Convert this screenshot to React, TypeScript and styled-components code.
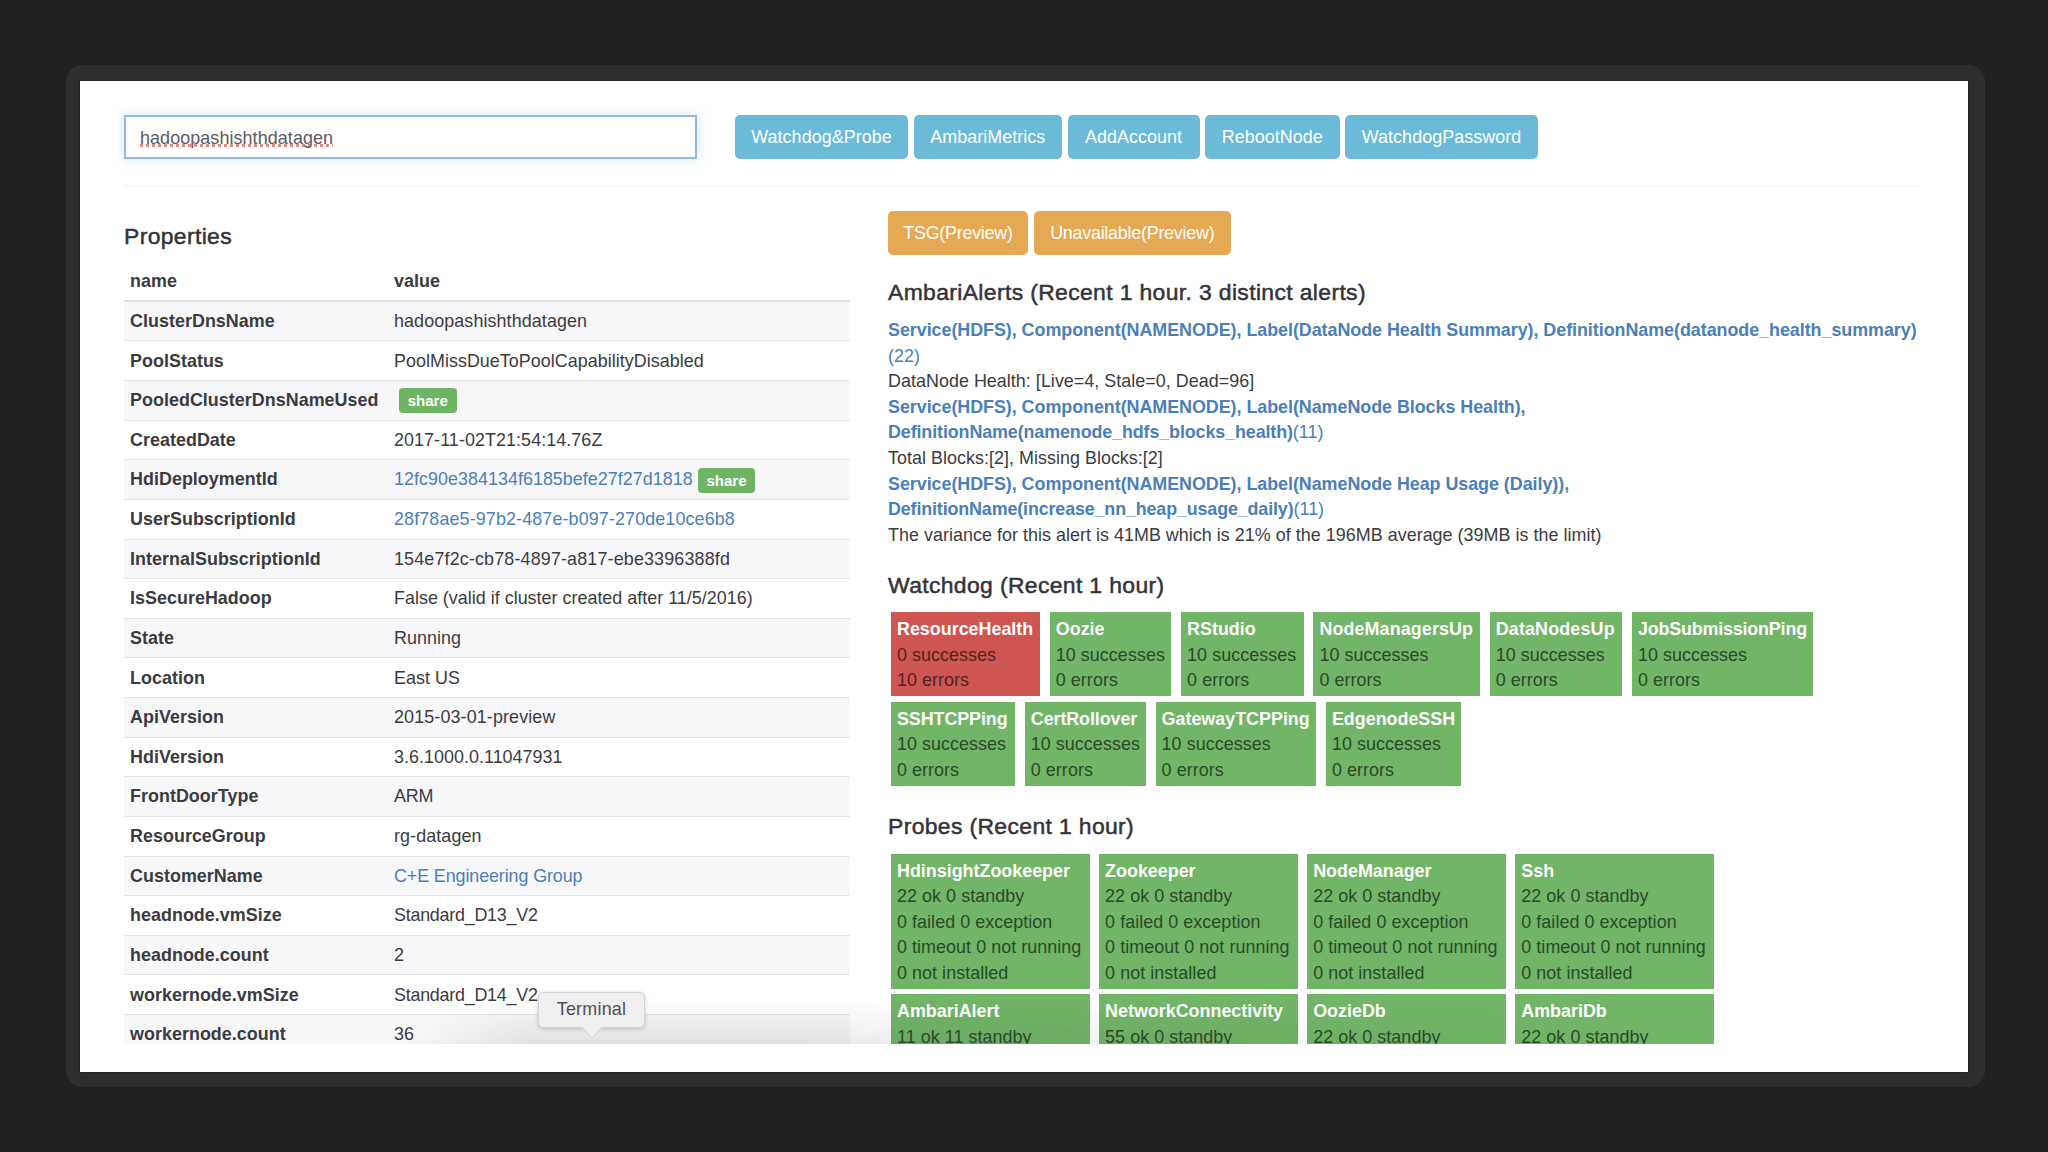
import React from "react";
import styled, { createGlobalStyle } from "styled-components";

const Global = createGlobalStyle`
  * { box-sizing: border-box; }
  body {
    margin: 0;
    background: #222122;
    font-family: "Liberation Sans", Arial, sans-serif;
    font-size: 17.9px;
    line-height: 25.57px;
    letter-spacing: 0.04px;
    color: #3b3b3f;
    overflow: hidden;
  }
`;

const Stage = styled.div`
  width: 2048px;
  height: 1152px;
  padding: 65px 63px 65px 66px;
  background: #222122;
`;

const Frame = styled.div`
  height: 1022px;
  border-radius: 16px;
  padding: 16px 17px 15px 14px;
  background: #2f2e2f;
`;

const Sheet = styled.div`
  height: 991px;
  background: #fff;
  box-shadow: 0 0 2px 0 #111;
`;

const Viewport = styled.div`
  position: relative;
  height: 963px;
  padding: 34px 49px 0 44px;
  overflow: hidden;
`;

const TopBar = styled.div`
  display: flex;
  height: 72px;
  border-bottom: 2px solid #f8f8fb;
`;

const ClusterInput = styled.div`
  width: 573px;
  height: 44px;
  margin-right: 38px;
  padding: 9px 14px;
  border: 2px solid #94bbdd;
  box-shadow: 0 0 9px rgba(102, 185, 233, 0.35);
  color: #5b5b62;
  letter-spacing: 0.1px;
`;

const Misspelled = styled.span`
  text-decoration: underline dotted #dd8e86 3px;
  text-underline-offset: 0;
  text-decoration-skip-ink: none;
`;

const ButtonRow = styled.div`
  display: flex;
  gap: 5.5px;
`;

const Button = styled.button<{ $tone: "info" | "warning"; $w: number }>`
  width: ${(p) => p.$w}px;
  height: 43.5px;
  padding: 2px 0 0;
  border: 0;
  border-radius: 5px;
  background: ${(p) => (p.$tone === "info" ? "#6bbad8" : "#e5a853")};
  color: #fff;
  font: inherit;
  letter-spacing: ${(p) => (p.$tone === "info" ? 0.06 : -0.24)}px;
  white-space: nowrap;
`;

const Columns = styled.div`
  display: grid;
  grid-template-columns: 726px 1fr;
  column-gap: 38px;
`;

const LeftColumn = styled.section`
  padding-top: 35px;
`;

const RightColumn = styled.section`
  padding-top: 24px;
`;

const Heading = styled.h4<{ $top?: number; $bottom?: number }>`
  margin: ${(p) => p.$top ?? 0}px 0 ${(p) => p.$bottom ?? 0}px;
  font-size: 22.9px;
  font-weight: 400;
  line-height: 28px;
  letter-spacing: 0.37px;
  color: #333337;
  -webkit-text-stroke: 0.5px #333337;
`;

const PropertyRow = styled.div<{ $striped?: boolean }>`
  display: grid;
  grid-template-columns: 264px 1fr;
  align-items: center;
  height: 39.63px;
  padding: 1.2px 6px 0;
  border-bottom: 1.5px solid #e4e4e7;
  background: ${(p) => (p.$striped ? "#f7f7f9" : "#fff")};
  white-space: nowrap;
`;

const HeaderRow = styled(PropertyRow)`
  height: 38px;
  border-bottom: 0;
  font-weight: 700;
`;

const TableBody = styled.div`
  border-top: 2px solid #dfdfe2;
`;

const Name = styled.span`
  font-weight: 700;
`;

const Value = styled.span<{ $tracking?: number }>`
  display: flex;
  align-items: center;
  letter-spacing: ${(p) => p.$tracking ?? 0.04}px;
`;

const Link = styled.a`
  color: #4a7fb8;
`;

const Share = styled.span`
  width: 57.5px;
  height: 25px;
  margin-left: 5px;
  border-radius: 4px;
  background: #6fb365;
  color: #fff;
  font-size: 15px;
  font-weight: 700;
  line-height: 26px;
  text-align: center;
`;

const AlertLine = styled.div`
  white-space: nowrap;
`;

const AlertLabel = styled.b<{ $tracking?: number }>`
  letter-spacing: ${(p) => p.$tracking ?? -0.04}px;
`;

const CardRow = styled.div<{ $gap: number }>`
  display: flex;
  column-gap: ${(p) => p.$gap}px;
  padding-left: 3px;
  margin-bottom: 5.5px;
`;

const Card = styled.div<{ $w: number; $bad?: boolean }>`
  width: ${(p) => p.$w}px;
  padding: 5px 0 2.3px 6px;
  background: ${(p) => (p.$bad ? "#cf5550" : "#71b566")};
  color: ${(p) => (p.$bad ? "#4d2426" : "#2b4a2b")};
  letter-spacing: 0.06px;
  white-space: nowrap;
`;

const CardTitle = styled.div<{ $tracking?: number }>`
  color: #fff;
  font-weight: 700;
  letter-spacing: ${(p) => p.$tracking ?? 0}px;
`;

const DockShade = styled.div`
  position: absolute;
  left: 330px;
  bottom: 0;
  width: 1200px;
  height: 44px;
  background: linear-gradient(to top, rgba(60, 60, 70, 0.11), rgba(60, 60, 70, 0));
  mask-image: linear-gradient(to right, transparent, #000 120px, #000 32%, transparent);
`;

const DockTip = styled.div`
  position: absolute;
  left: 458px;
  top: 911px;
  width: 107px;
  height: 36px;
  border: 1px solid #d2d2d5;
  border-radius: 5px;
  background: #efeef0;
  box-shadow: 0 1px 4px rgba(0, 0, 0, 0.18);
  color: #505054;
  line-height: 33px;
  letter-spacing: 0.25px;
  text-align: center;
`;

const TipArrow = styled.svg`
  position: absolute;
  left: 41px;
  top: 33px;
`;

type Property = { name: string; value?: string; link?: boolean; share?: boolean; tracking?: number };

const properties: Property[] = [
  { name: "ClusterDnsName", value: "hadoopashishthdatagen", tracking: 0.1 },
  { name: "PoolStatus", value: "PoolMissDueToPoolCapabilityDisabled" },
  { name: "PooledClusterDnsNameUsed", share: true },
  { name: "CreatedDate", value: "2017-11-02T21:54:14.76Z", tracking: 0.08 },
  { name: "HdiDeploymentId", value: "12fc90e384134f6185befe27f27d1818", link: true, share: true },
  { name: "UserSubscriptionId", value: "28f78ae5-97b2-487e-b097-270de10ce6b8", link: true, tracking: 0.13 },
  { name: "InternalSubscriptionId", value: "154e7f2c-cb78-4897-a817-ebe3396388fd", tracking: 0.16 },
  { name: "IsSecureHadoop", value: "False (valid if cluster created after 11/5/2016)", tracking: 0.02 },
  { name: "State", value: "Running" },
  { name: "Location", value: "East US" },
  { name: "ApiVersion", value: "2015-03-01-preview", tracking: 0.13 },
  { name: "HdiVersion", value: "3.6.1000.0.11047931" },
  { name: "FrontDoorType", value: "ARM", tracking: -0.2 },
  { name: "ResourceGroup", value: "rg-datagen", tracking: 0.1 },
  { name: "CustomerName", value: "C+E Engineering Group", link: true, tracking: -0.1 },
  { name: "headnode.vmSize", value: "Standard_D13_V2", tracking: -0.24 },
  { name: "headnode.count", value: "2" },
  { name: "workernode.vmSize", value: "Standard_D14_V2", tracking: -0.24 },
  { name: "workernode.count", value: "36" },
];

const actions: [string, number][] = [
  ["Watchdog&Probe", 173],
  ["AmbariMetrics", 148.5],
  ["AddAccount", 132],
  ["RebootNode", 134.5],
  ["WatchdogPassword", 193],
];

type Watchdog = { title: string; w: number; ok?: number; errors?: number; tracking?: number };

const watchdogs: Watchdog[][] = [
  [
    { title: "ResourceHealth", w: 149, ok: 0, errors: 10 },
    { title: "Oozie", w: 121.5 },
    { title: "RStudio", w: 122.5 },
    { title: "NodeManagersUp", w: 166.5, tracking: 0.12 },
    { title: "DataNodesUp", w: 132.5, tracking: 0.16 },
    { title: "JobSubmissionPing", w: 181, tracking: -0.18 },
  ],
  [
    { title: "SSHTCPPing", w: 124, tracking: -0.08 },
    { title: "CertRollover", w: 121, tracking: -0.08 },
    { title: "GatewayTCPPing", w: 160.5 },
    { title: "EdgenodeSSH", w: 135 },
  ],
];

const probeDetails = ["0 failed 0 exception", "0 timeout 0 not running", "0 not installed"];

const probes: { details: string[]; cards: [string, string][] }[] = [
  {
    details: probeDetails,
    cards: [
      ["HdinsightZookeeper", "22 ok 0 standby"],
      ["Zookeeper", "22 ok 0 standby"],
      ["NodeManager", "22 ok 0 standby"],
      ["Ssh", "22 ok 0 standby"],
    ],
  },
  {
    details: [],
    cards: [
      ["AmbariAlert", "11 ok 11 standby"],
      ["NetworkConnectivity", "55 ok 0 standby"],
      ["OozieDb", "22 ok 0 standby"],
      ["AmbariDb", "22 ok 0 standby"],
    ],
  },
];

export default function App() {
  return (
    <Stage>
      <Global />
      <Frame>
        <Sheet>
          <Viewport>
            <TopBar>
              <ClusterInput>
                <Misspelled>hadoopashishthdatagen</Misspelled>
              </ClusterInput>
              <ButtonRow>
                {actions.map(([label, w]) => (
                  <Button key={label} $tone="info" $w={w}>
                    {label}
                  </Button>
                ))}
              </ButtonRow>
            </TopBar>
            <Columns>
              <LeftColumn>
                <Heading $bottom={11.8}>Properties</Heading>
                <HeaderRow>
                  <span>name</span>
                  <span>value</span>
                </HeaderRow>
                <TableBody>
                  {properties.map((p, i) => (
                    <PropertyRow key={p.name} $striped={i % 2 === 0}>
                      <Name>{p.name}</Name>
                      <Value $tracking={p.tracking}>
                        {p.link ? <Link>{p.value}</Link> : p.value}
                        {p.share && <Share>share</Share>}
                      </Value>
                    </PropertyRow>
                  ))}
                </TableBody>
              </LeftColumn>
              <RightColumn>
                <ButtonRow>
                  <Button $tone="warning" $w={140}>TSG(Preview)</Button>
                  <Button $tone="warning" $w={197.5}>Unavailable(Preview)</Button>
                </ButtonRow>
                <Heading $top={23.5} $bottom={12.2}>AmbariAlerts (Recent 1 hour. 3 distinct alerts)</Heading>
                <AlertLine>
                  <Link>
                    <AlertLabel>
                      Service(HDFS), Component(NAMENODE), Label(DataNode Health Summary), DefinitionName(datanode_health_summary)
                    </AlertLabel>
                    <br />
                    (22)
                  </Link>
                </AlertLine>
                <AlertLine>DataNode Health: [Live=4, Stale=0, Dead=96]</AlertLine>
                <AlertLine>
                  <Link>
                    <AlertLabel>Service(HDFS), Component(NAMENODE), Label(NameNode Blocks Health),</AlertLabel>
                    <br />
                    <AlertLabel $tracking={-0.11}>DefinitionName(namenode_hdfs_blocks_health)</AlertLabel>
                    (11)
                  </Link>
                </AlertLine>
                <AlertLine>Total Blocks:[2], Missing Blocks:[2]</AlertLine>
                <AlertLine>
                  <Link>
                    <AlertLabel>Service(HDFS), Component(NAMENODE), Label(NameNode Heap Usage (Daily)),</AlertLabel>
                    <br />
                    <AlertLabel $tracking={-0.14}>DefinitionName(increase_nn_heap_usage_daily)</AlertLabel>
                    (11)
                  </Link>
                </AlertLine>
                <AlertLine>The variance for this alert is 41MB which is 21% of the 196MB average (39MB is the limit)</AlertLine>
                <Heading $top={22.5} $bottom={13.3}>Watchdog (Recent 1 hour)</Heading>
                {watchdogs.map((row, i) => (
                  <CardRow key={i} $gap={9.8}>
                    {row.map(({ title, w, ok = 10, errors = 0, tracking }) => (
                      <Card key={title} $w={w} $bad={errors > 0}>
                        <CardTitle $tracking={tracking}>{title}</CardTitle>
                        <div>{`${ok} successes`}</div>
                        <div>{`${errors} errors`}</div>
                      </Card>
                    ))}
                  </CardRow>
                ))}
                <Heading $top={26.6} $bottom={13.6}>Probes (Recent 1 hour)</Heading>
                {probes.map((row, i) => (
                  <CardRow key={i} $gap={9}>
                    {row.cards.map(([title, status]) => (
                      <Card key={title} $w={199.1}>
                        <CardTitle>{title}</CardTitle>
                        <div>{status}</div>
                        {row.details.map((d) => (
                          <div key={d}>{d}</div>
                        ))}
                      </Card>
                    ))}
                  </CardRow>
                ))}
              </RightColumn>
            </Columns>
            <DockShade />
            <DockTip>
              Terminal
              <TipArrow width="24" height="14" viewBox="0 0 24 14">
                <path d="M2 1 L12 12 L22 1" fill="#efeef0" stroke="#d2d2d5" />
                <path d="M1 0 H23" stroke="#efeef0" strokeWidth="2.5" />
              </TipArrow>
            </DockTip>
          </Viewport>
        </Sheet>
      </Frame>
    </Stage>
  );
}
